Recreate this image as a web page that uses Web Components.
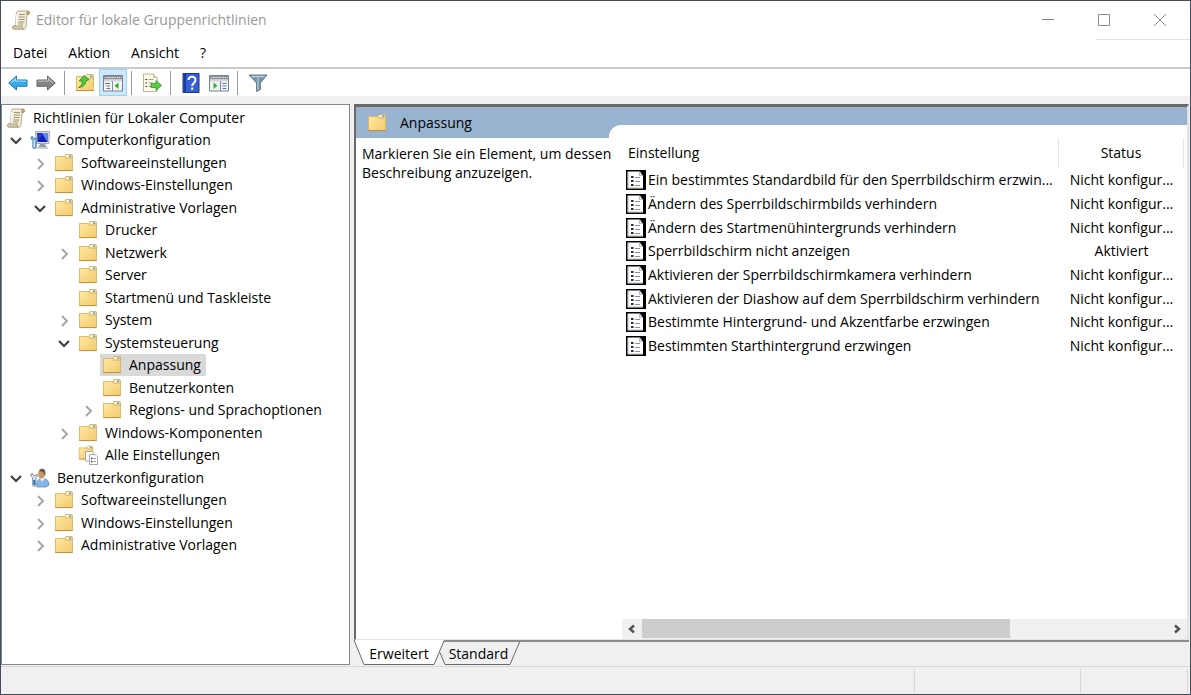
<!DOCTYPE html>
<html lang="de">
<head>
<meta charset="utf-8">
<title>Editor für lokale Gruppenrichtlinien</title>
<style>
  html, body { height: 100%; margin: 0; }
  body { font: 14px/20px "Open Sans", "Noto Sans", sans-serif; color: #000; background: #f0f0f0; }
</style>
</head>
<body>
<gp-window>
  <gp-titlebar slot="title">Editor für lokale Gruppenrichtlinien</gp-titlebar>
  <gp-menubar slot="menu"></gp-menubar>
  <gp-toolbar slot="tools"></gp-toolbar>
  <gp-tree slot="tree"></gp-tree>
  <gp-details slot="details">
    <span slot="heading">Anpassung</span>
    <span slot="description">Markieren Sie ein Element, um dessen Beschreibung anzuzeigen.</span>
    <gp-policies slot="list"></gp-policies>
  </gp-details>
  <gp-tabs slot="tabs"></gp-tabs>
  <gp-statusbar slot="status"></gp-statusbar>
</gp-window>

<script>
const folder = `<path d="M10.500 3.500 12 1.500h6l.5 1v4h-8z" fill="#f2d88c" stroke="#d0aa55" stroke-width=".8"/><path d="M12.500 2.500h5v1.500h-5z" fill="#fff"/><path d="M15 2.500h2.300v1.500H15z" fill="#4aa3dc"/><path d="M1.500 3.500h8.500l1.500 1.700h7v12.300h-17z" fill="url(#f)" stroke="#d9b565" stroke-width=".9"/><path d="M1.200 17.600h17.500" stroke="#b8923f"/>`;
const folderDefs = `<defs><linearGradient id="f" x1="0" y1="0" x2="1" y2="1"><stop offset="0" stop-color="#ffe9a4"/><stop offset="1" stop-color="#f2ca6c"/></linearGradient></defs>`;
const paneBody = `<path d="M.5 2.500h19v15.500h-19z" fill="#f4f4f4" stroke="#7b8189"/><path d="M1 3h18v3.500h-18z" fill="#8b919b"/><path d="M2 4.500h11" stroke="#c5c9cf"/><path d="M14 4.500h1m1 0h1m1 0h.6" stroke="#fff"/><path d="M1 7.500h18" stroke="#d3d7dc" stroke-width="2"/>`;
const icons = {
  folder: folderDefs + folder,
  scroll: `<path d="M5.500 2.500C6 1 7 1 8 1h9c2 0 2 3 .5 3.500H16l-1 12c-.2 2-1 2.500-2 2.500H3c-2 0-2-3 0-3h1.500z" fill="#f4eed8" stroke="#aaa084" stroke-width=".9"/><path d="M16 4.500c-.8-1-.5-2.500.6-3.200C18.800 1 19 4 17.500 4.500z" fill="#c6a766" stroke="#9d8554" stroke-width=".6"/><path d="M3 16h8.500c-.7 1 0 3 1 3H3c-2 0-2-3 0-3" fill="#d9cfae" stroke="#988e74" stroke-width=".7"/><path d="M8 4.500h6M7.800 7h6M7.500 9.500h6M7.300 12h6M7.200 14h5" stroke="#9a927b"/><path d="M6 4l-.8 11" stroke="#fff" stroke-width="1.300"/>`,
  computer: `<path d="M5.500 1.500h14l-.6 12H6z" fill="#d9dce2" stroke="#9299a7" stroke-width=".8"/><path d="M7 3h11l-.5 9H7.500z" fill="#1520b8"/><path d="M12 3h6l-.5 9z" fill="#6589f5"/><path d="M8 4l5-.5-4 6z" fill="#2b3ee8"/><path d="M10 14h5l2 3.500H8z" fill="#969da8"/><path d="M7 18h11" stroke="#c2c5cb" stroke-width="1.500"/><path d="M1 7c0 2 .8 3 1.800 3.400V17c0 2 3.400 2 3.400 0v-6.600C7.500 10 8 8.500 7.600 7L6 8.500H3.800L2.500 6.500z" fill="#75b5e4" stroke="#5c6f86" stroke-width=".8"/><path d="M4.200 10v7" stroke="#e8f7ff"/>`,
  user: `<path d="M7 19c-1-5 1-8 4-8.500h3c4 1 5 4 5 6.500l-3 2z" fill="#83b8e6" stroke="#5784b5" stroke-width=".7"/><path d="M10 10l2 4 3-4z" fill="#f2f7fb"/><ellipse cx="11.500" cy="6" rx="3.300" ry="4.500" fill="#c99662"/><path d="M9 3C10 1 11 .700 12.300.800 15.500 1 16 4 15.200 8L13.200 4.200z" fill="#6d5a48"/><path d="M1 6c0 2 .7 3.300 1.700 3.700V17c0 2 3.200 2 3.200 0V9.700C7.200 9 7.500 7.500 7 6L5.500 7.500H3.500L2.500 5.500z" fill="#dbe7ef" stroke="#6a7584" stroke-width=".8"/><path d="M4.300 12v5" stroke="#2e6fb0" stroke-width="2"/>`,
  all: folderDefs + `<g transform="scale(.8)">${folder}</g><path d="M7.500 6.500h6l2 2V16h-8z" fill="#fafafa" stroke="#92969c" stroke-width=".8"/><path d="M11.500 9.500H17l2.500 2.500v7.500h-8z" fill="#fff" stroke="#92969c" stroke-width=".8"/><path d="M13 13.500h1.500M13 16.500h1.500" stroke="#2a3456" stroke-width="1.300"/><path d="M15.500 13.500H18M15.500 16.500H18" stroke="#9793b9"/>`,
  policy: `<path d="M0 0h20v20H0z" fill="#000"/><path d="M1.500 1.500H14L17 6v12.500H1.500z" fill="#fff"/><path d="M2.500 2v16M2 17.500h15" fill="none" stroke="#dedede"/><path d="M13 1.500V6h4z" fill="#bcbcbc"/><path d="M14 3.500v1.700h1.700z" fill="#eee"/><path d="M5 7h2.500M5 11h2.500M5 15h2.500" stroke="#29294c" stroke-width="2"/><path d="M9 7.500h5M9 11.500h5M9 15.500h5" stroke="#8d8ba9"/>`,
  back: `<path d="M.7 10 8.500 3v4H19v6.300H8.500V17z" fill="#35aae9" stroke="#2279b1"/><path d="M3 9.700l4.500-4v2.500H18" fill="none" stroke="#8bd8fa" stroke-width="1.300"/>`,
  forward: `<path d="M19.300 10 11.500 3v4H1v6.300h10.500V17z" fill="#858585" stroke="#666"/><path d="M2 8.200h10.500V5.700l4.300 4" fill="none" stroke="#b6b6b6" stroke-width="1.300"/>`,
  up: folderDefs + folder + `<path d="M3.500 14.500c3-1.500 3.800-3.500 3.800-6.500H4.200l4.800-5.500 5 4.300-3 .8c0 4-2.500 6.400-7.500 6.900z" fill="#4fcb35" stroke="#288c20" stroke-width=".8"/>`,
  tree: paneBody + `<path d="M9.500 8v10" stroke="#868d96"/><path d="M2 10.500h5M3.500 13h3.500M3.500 15.500h3.500" stroke="#68727e"/><path d="M15.500 9.500v6.500l-4-3.200z" fill="#2bb32b"/>`,
  pane: paneBody + `<path d="M11.500 8v10" stroke="#868d96"/><path d="M13.500 10.500h4M13.500 13h4M13.500 15.500h4" stroke="#587da8"/><path d="M4.500 9.500v6.500l4-3.200z" fill="#2bb32b"/>`,
  export: `<path d="M1.500 1h10l3.500 3.500v14H1.500z" fill="#fffbe9" stroke="#b5ad91" stroke-width=".9"/><path d="M11.500 1v3.500H15" fill="#e9dfbb" stroke="#b5ad91" stroke-width=".8"/><path d="M3.500 6.500H5M3.500 10H5M3.500 13.500H5" stroke="#222"/><path d="M6.500 6.500h5M6.500 10h4M6.500 13.500h4" stroke="#a49c91"/><path d="M9 10.500h5V7.500l5.500 5-5.500 5v-3H9z" fill="#58cd43" stroke="#279b2b" stroke-width=".8"/>`,
  help: `<path d="M2 .5h16v19H2z" fill="#3560d4" stroke="#1b358e"/><path d="M4 1v18" stroke="#1c3a9c" stroke-width="2"/><path d="M7.500 7c0-4 7-4.500 7 0 0 3-3.300 2.800-3.300 6" fill="none" stroke="#fff" stroke-width="2"/><path d="M10.100 14.500h2.200v2.200h-2.200z" fill="#fff"/>`,
  filter: `<path d="M1 2h18l-6.700 8v6.500l-3.700 2V10z" fill="#7896a8" stroke="#566f7e" stroke-width=".9"/><path d="M3.500 3.500h13" stroke="#bdd1dc" stroke-width="1.500"/><path d="M10 5v12" stroke="#a9c1ce" stroke-width="1.500"/>`,
  open: `<path d="M5 8l5 5 5-5" fill="none" stroke="#404040" stroke-width="2.200"/>`,
  closed: `<path d="M8 6l5 5-5 5" fill="none" stroke="#a6a6a6" stroke-width="2"/>`,
  left: `<path d="M12 6.500l-4 3.500 4 3.500" fill="none" stroke="#505050" stroke-width="2.400"/>`,
  right: `<path d="M8 6.500l4 3.500-4 3.500" fill="none" stroke="#505050" stroke-width="2.400"/>`,
  minimize: `<path d="M4 9.500h12" stroke="#8c8c8c"/>`,
  maximize: `<path d="M4.500 4.500h11v11h-11z" fill="none" stroke="#8c8c8c"/>`,
  close: `<path d="M4 4l12 12M16 4L4 16" stroke="#8c8c8c"/>`
};

function define(name, markup, setup) {
  const template = document.createElement("template");
  template.innerHTML = `<style>
    :host, * { box-sizing: border-box; }
    button { font: inherit; color: inherit; background: none; border: 0; padding: 0; margin: 0; }
    </style>` + markup;
  customElements.define(name, class extends HTMLElement {
    constructor() {
      super();
      this.attachShadow({ mode: "open" }).append(template.content.cloneNode(true));
    }
    connectedCallback() { if (setup) setup(this, this.shadowRoot); }
  });
}

define("gp-icon", `<style>
  :host { display: block; flex: none; width: 20px; height: 20px; }
  svg { display: block; width: 100%; height: 100%; }
</style><svg viewBox="0 0 20 20" aria-hidden="true"></svg>`,
(host, root) => { root.querySelector("svg").innerHTML = icons[host.getAttribute("name")]; });

define("gp-titlebar", `<style>
  :host { display: flex; align-items: center; height: 38px; padding-left: 10px; background: #fff; color: #999; }
  h1 { flex: 1; margin: 0 0 0 5px; font-size: 14px; font-weight: 400; white-space: nowrap; }
  .caption { position: relative; display: flex; align-self: stretch; padding-right: 2px; }
  .caption::after { content: ""; position: absolute; right: 0; bottom: -1px; width: 94px; height: 1px; background: #e2e2e2; }
  .caption button { display: grid; place-items: center; width: 56px; }
</style>
<gp-icon name="scroll"></gp-icon><h1><slot></slot></h1>
<div class="caption">
  <button aria-label="Minimieren"><gp-icon name="minimize"></gp-icon></button>
  <button aria-label="Maximieren"><gp-icon name="maximize"></gp-icon></button>
  <button aria-label="Schließen"><gp-icon name="close"></gp-icon></button>
</div>`);

define("gp-menubar", `<style>
  :host { display: block; background: #fff; border-bottom: 2px solid #c5cbd1; }
  nav { display: flex; gap: 21px; height: 28px; padding: 0 12px; }
</style>
<nav><button>Datei</button><button>Aktion</button><button>Ansicht</button><button>?</button></nav>`);

define("gp-toolbar", `<style>
  :host { display: flex; align-items: center; height: 27px; padding-left: 3px; background: #fff; }
  button { display: grid; place-items: center; width: 28px; height: 27px; }
  .on { background: #cce8ff; border: 1px solid #99d1ff; }
  i { width: 1px; height: 24px; margin: 0 6px 0 4px; background: #9a9a9a; }
</style>
<button aria-label="Zurück"><gp-icon name="back"></gp-icon></button>
<button aria-label="Vorwärts"><gp-icon name="forward"></gp-icon></button><i></i>
<button aria-label="Eine Ebene nach oben"><gp-icon name="up"></gp-icon></button>
<button class="on" aria-label="Konsolenstruktur einblenden"><gp-icon name="tree"></gp-icon></button><i></i>
<button aria-label="Liste exportieren"><gp-icon name="export"></gp-icon></button><i></i>
<button aria-label="Hilfe"><gp-icon name="help"></gp-icon></button>
<button aria-label="Aktionsbereich einblenden"><gp-icon name="pane"></gp-icon></button><i></i>
<button aria-label="Filter"><gp-icon name="filter"></gp-icon></button>`);

define("gp-tree-item", `<style>
  :host { display: flex; align-items: stretch; }
  .toggle { display: grid; place-items: center; flex: none; width: 24px; }
  .item { display: flex; align-items: center; gap: 7px; padding: 0 5px 0 2px; white-space: nowrap; }
  :host([selected]) .item { background: #d9d9d9; }
</style>
<button class="toggle" aria-label="Auf- oder zuklappen"></button>
<button class="item"></button>`,
(host, root) => {
  const level = Number(host.getAttribute("level"));
  const state = host.getAttribute("state");
  const toggle = root.querySelector(".toggle");
  if (level === 0) toggle.remove();
  else {
    host.style.paddingLeft = (level - 1) * 24 + "px";
    if (state) toggle.innerHTML = `<gp-icon name="${state}"></gp-icon>`;
    else toggle.disabled = true;
  }
  root.querySelector(".item").innerHTML = `<gp-icon name="${host.getAttribute("icon")}"></gp-icon><slot></slot>`;
});

const nodes = [
  [0, "", "scroll", "Richtlinien für Lokaler Computer"],
  [1, "open", "computer", "Computerkonfiguration"],
  [2, "closed", "folder", "Softwareeinstellungen"],
  [2, "closed", "folder", "Windows-Einstellungen"],
  [2, "open", "folder", "Administrative Vorlagen"],
  [3, "", "folder", "Drucker"],
  [3, "closed", "folder", "Netzwerk"],
  [3, "", "folder", "Server"],
  [3, "", "folder", "Startmenü und Taskleiste"],
  [3, "closed", "folder", "System"],
  [3, "open", "folder", "Systemsteuerung"],
  [4, "", "folder", "Anpassung"],
  [4, "", "folder", "Benutzerkonten"],
  [4, "closed", "folder", "Regions- und Sprachoptionen"],
  [3, "closed", "folder", "Windows-Komponenten"],
  [3, "", "all", "Alle Einstellungen"],
  [1, "open", "user", "Benutzerkonfiguration"],
  [2, "closed", "folder", "Softwareeinstellungen"],
  [2, "closed", "folder", "Windows-Einstellungen"],
  [2, "closed", "folder", "Administrative Vorlagen"]
];
define("gp-tree", `<style>
  :host { display: block; padding: 1px 2px; background: #fff; border: 1px solid #828790; overflow: hidden; }
  gp-tree-item { height: 22px; }
  gp-tree-item:nth-of-type(odd) { height: 23px; }
</style>` + nodes.map(([level, state, icon, text]) =>
  `<gp-tree-item level="${level}" state="${state}" icon="${icon}"${text === "Anpassung" ? " selected" : ""}>${text}</gp-tree-item>`).join(""));

define("gp-details", `<style>
  :host { display: grid; grid-template: 18px 13px minmax(0, 1fr) / 253px minmax(0, 1fr);
    background: #99b4d1; border: solid; border-width: 3px 2px 1px; border-color: #696969 #e3e3e3 #e3e3e3 #696969; }
  h2 { grid-area: 1 / 1 / 3 / 2; display: flex; align-items: center; gap: 13px; margin: 0; padding-left: 11px; font-size: 14px; font-weight: 400; }
  .text { grid-area: 3 / 1 / 4 / 3; background: #fff; }
  p { width: 264px; margin: 0; padding: 6px 0 0 6px; line-height: 19px; }
  .list { grid-area: 2 / 2 / 4 / 3; display: flex; flex-direction: column; }
  .cap { flex: none; height: 13px; background: #fff; border-top-left-radius: 12px; }
  .list ::slotted(*) { flex: 1; margin-left: 13px; }
</style>
<h2><gp-icon name="folder"></gp-icon><slot name="heading"></slot></h2>
<div class="text"><p><slot name="description"></slot></p></div>
<div class="list"><div class="cap"></div><slot name="list"></slot></div>`);

const policies = [
  ["Ein bestimmtes Standardbild für den Sperrbildschirm erzwin...", "Nicht konfigur..."],
  ["Ändern des Sperrbildschirmbilds verhindern", "Nicht konfigur..."],
  ["Ändern des Startmenühintergrunds verhindern", "Nicht konfigur..."],
  ["Sperrbildschirm nicht anzeigen", "Aktiviert"],
  ["Aktivieren der Sperrbildschirmkamera verhindern", "Nicht konfigur..."],
  ["Aktivieren der Diashow auf dem Sperrbildschirm verhindern", "Nicht konfigur..."],
  ["Bestimmte Hintergrund- und Akzentfarbe erzwingen", "Nicht konfigur..."],
  ["Bestimmten Starthintergrund erzwingen", "Nicht konfigur..."]
];
define("gp-policies", `<style>
  :host { display: flex; flex-direction: column; min-height: 0; }
  .view { flex: 1; padding-right: 3px; }
  table { width: 100%; border-collapse: separate; border-spacing: 0; table-layout: fixed; }
  th { height: 30px; padding: 0 0 0 6px; border-right: 1px solid #e5e5e5; font-weight: 400; text-align: left; }
  th:last-child { width: 125px; }
  th:last-child, td:last-child { padding: 0; text-align: center; }
  td { height: 24px; padding: 0 0 0 4px; white-space: nowrap; }
  tr:nth-child(3n) td { height: 23px; }
  td div { display: flex; align-items: center; gap: 2px; }
  .bar { display: flex; height: 20px; background: #f0f0f0; }
  .bar button { display: grid; place-items: center; width: 20px; }
  .track { flex: 1; }
  .thumb { width: 70%; height: 19px; background: #cdcdcd; }
</style>
<div class="view"><table>
  <thead><tr><th scope="col">Einstellung</th><th scope="col">Status</th></tr></thead>
  <tbody>${policies.map(([name, status]) => `<tr><td><div><gp-icon name="policy"></gp-icon>${name}</div></td><td>${status}</td></tr>`).join("")}</tbody>
</table></div>
<div class="bar"><button aria-label="Nach links"><gp-icon name="left"></gp-icon></button><div class="track"><div class="thumb"></div></div><button aria-label="Nach rechts"><gp-icon name="right"></gp-icon></button></div>`);

define("gp-tabs", `<style>
  :host { display: flex; height: 26px; border-top: 2px solid #8c8c8c; }
  button { position: relative; display: grid; place-items: center; height: 24px; }
  svg { position: absolute; left: 0; bottom: 0; overflow: visible; }
  span { position: relative; }
  .active { width: 86px; padding-left: 4px; z-index: 1; }
  .other { width: 82px; padding-right: 5px; }
</style>
<button class="active" aria-pressed="true"><svg width="86" height="26" aria-hidden="true"><path d="M0 0L10 24.500H80L90 0z" fill="#fff"/><path d="M0 0L10 24.500H80L90 1" fill="none" stroke="#696969"/></svg><span>Erweitert</span></button>
<button class="other" aria-pressed="false"><svg width="82" height="26" aria-hidden="true"><path d="M0 12.500L5 24.500H70L80 1" fill="none" stroke="#696969"/></svg><span>Standard</span></button>`);

define("gp-statusbar", `<style>
  :host { display: flex; height: 28px; padding: 2px 2px 1px 0; border-top: 1px solid #d7d7d7; background: #f0f0f0; }
  div { border-right: 1px solid #d7d7d7; }
  div:nth-of-type(1) { flex: 1; }
  div:nth-of-type(2) { width: 166px; }
  div:nth-of-type(3) { width: 107px; }
</style><div></div><div></div><div></div>`);

define("gp-window", `<style>
  :host { display: flex; flex-direction: column; min-height: 100vh; border: 1px solid #434c5c; background: #f0f0f0; }
  main { flex: 1; display: grid; grid-template-columns: 349px minmax(0, 1fr); column-gap: 4px; padding: 8px 1px 0 0; }
  slot[name=tree]::slotted(*) { margin-bottom: 1px; }
  .right { display: flex; flex-direction: column; min-width: 0; }
  slot[name=details]::slotted(*) { flex: 1; }
</style>
<slot name="title"></slot><slot name="menu"></slot><slot name="tools"></slot>
<main><slot name="tree"></slot><div class="right"><slot name="details"></slot><slot name="tabs"></slot></div></main>
<slot name="status"></slot>`);
</script>
</body>
</html>
